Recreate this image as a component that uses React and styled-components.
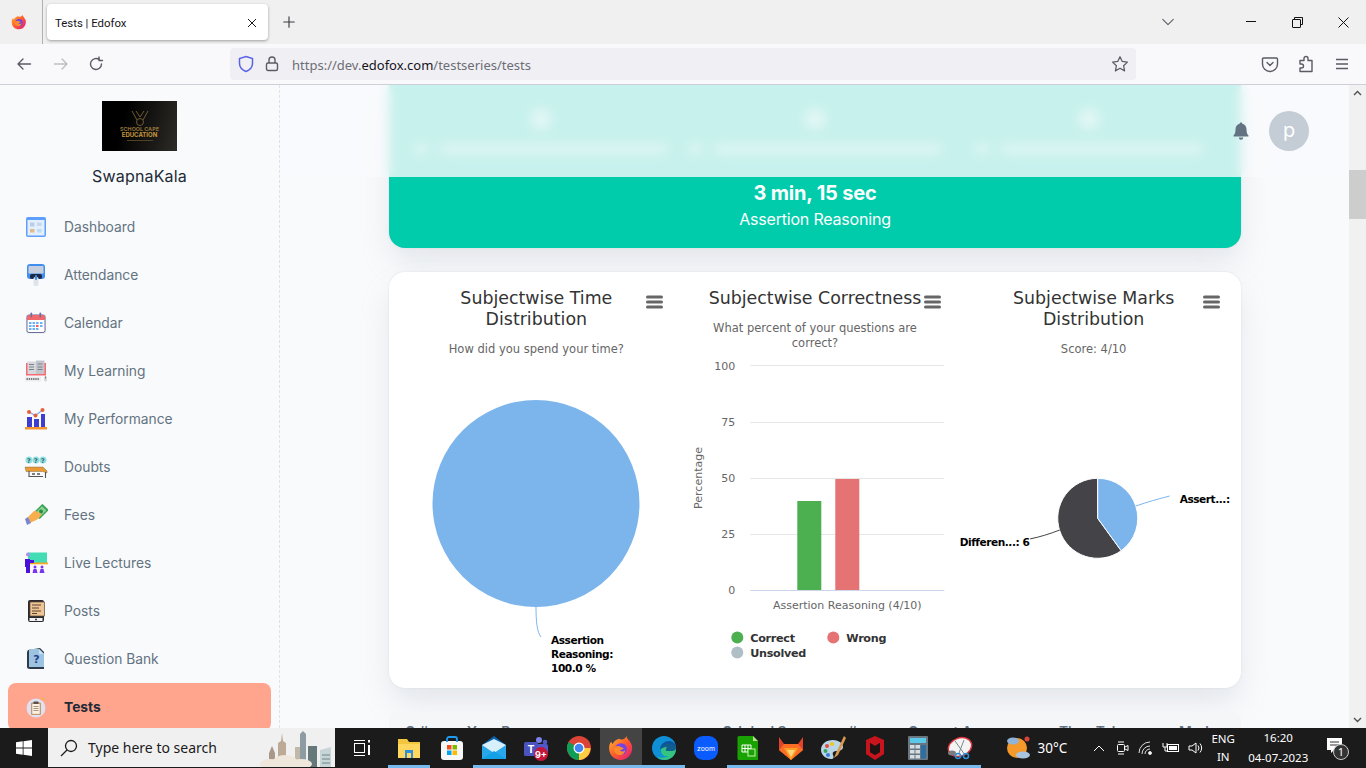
import React from "react";
import styled, { createGlobalStyle } from "styled-components";

const Global = createGlobalStyle`
  html, body { margin: 0; padding: 0; overflow: hidden; background: #fff; }
  * { box-sizing: border-box; }
  svg { display: block; flex: none; }
`;

const UI = `"Noto Sans", "Open Sans", sans-serif`;
const WEB = `Inter, "Noto Sans", sans-serif`;
const CHART = `"DejaVu Sans", sans-serif`;
const SHADOW = `0 0 2px rgba(145,158,171,.24), 0 16px 32px -4px rgba(145,158,171,.24)`;

const Page = styled.div`
  width: 1366px; height: 768px; display: flex; flex-direction: column; overflow: hidden;
`;
const TabBar = styled.div`
  height: 44px; background: #f0f0f0; display: flex; align-items: center; flex: none;
`;
const BrowserSlot = styled.div`
  width: 43px; height: 44px; display: flex; align-items: center; justify-content: center;
  border-right: 1px solid #b0b0b0; padding-right: 4px; flex: none;
`;
const Tab = styled.div`
  margin-left: 4px; width: 221px; height: 36px; background: #fff; border-radius: 4px;
  box-shadow: 0 1px 3px rgba(0,0,0,.35); display: flex; align-items: center; justify-content: space-between;
  padding: 1px 10px 0 8px; font: 11.4px Roboto, ${UI}; color: #15141a; flex: none;
`;
const NewTab = styled.div`
  margin-left: 14px; display: flex; align-items: center; flex: none;
`;
const Spacer = styled.div`flex: 1;`;
const TabList = styled.div`
  margin-right: 53px; flex: none;
`;
const WinBtn = styled.div`
  width: 46px; height: 44px; display: flex; align-items: center; justify-content: center; flex: none;
`;
const NavBar = styled.div`
  height: 41px; background: #f9f9fb; border-bottom: 1px solid #cfcfd8; display: flex; align-items: center; flex: none;
`;
const NavBtn = styled.div`
  width: ${p => p.$w}px; display: flex; justify-content: center; flex: none;
`;
const UrlBar = styled.div`
  margin-left: 112px; width: 906px; height: 32px; background: #f0f0f4; border-radius: 4px; display: flex; align-items: center;
  padding: 0 7px 0 8px; flex: none;
`;
const Shield = styled.div`margin-right: 11px; flex: none;`;
const Lock = styled.div`margin-right: 13px; flex: none;`;
const Url = styled.div`
  flex: 1; padding-top: 1px; font: 13px ${UI}; color: #6d6d75; white-space: nowrap;
  b { font-weight: 400; color: #15141a; }
`;
const ToolIcons = styled.div`
  margin-left: 125px; display: flex; gap: 18px; flex: none;
`;
const Body = styled.div`
  height: 643px; display: flex; flex: none; overflow: hidden;
`;
const Sidebar = styled.aside`
  width: 280px; flex: none; background: #f9fafc; border-right: 1px dashed #dfe3e8; padding-top: 16px;
  display: flex; flex-direction: column; overflow: hidden;
`;
const LogoBox = styled.div`
  width: 75px; height: 50px; margin: 0 0 0 102px; background: linear-gradient(105deg, #000 30%, #2e2c28);
  display: flex; flex-direction: column; align-items: center; padding-top: 9px; flex: none;
`;
const LogoLine = styled.div`
  font: 700 ${p => p.$s}px/${p => p.$s}px ${WEB}; color: ${p => p.$c}; white-space: nowrap;
`;
const LogoRule = styled.div`margin-top: 2px; width: 26px; height: 1px; background: #4e4229;`;
const OrgName = styled.div`
  margin: 15px 0 0; text-align: center; font: 400 16px/20px ${WEB}; color: #212b36; flex: none; height: 37px; letter-spacing: .01em;
`;
const Nav = styled.nav`display: flex; flex-direction: column; flex: none;`;
const NavItem = styled.div`
  height: 48px; margin: 0 8px; padding-left: 16px; display: flex; align-items: center; gap: 16px; border-radius: 8px;
  background: ${p => p.$active ? "#ffa48d" : "transparent"};
  color: ${p => p.$active ? "#212b36" : "#637381"};
  font: ${p => p.$active ? 700 : 400} 13.8px ${WEB}; flex: none;
`;
const Main = styled.main`
  flex: 1; position: relative; background: #f9fafc; overflow: hidden; padding: 0 108px 0 109px;
`;
const TopHeader = styled.header`
  position: absolute; top: 0; left: 0; right: 0; height: 92px; background: rgba(249,250,252,.8); backdrop-filter: blur(6px);
  display: flex; align-items: center; justify-content: flex-end; padding-right: 40px; gap: 18px;
`;
const Avatar = styled.div`
  width: 40px; height: 40px; border-radius: 50%; background: #c4cdd5; color: #fff; font: 20px ${WEB};
  display: flex; align-items: center; justify-content: center; padding-bottom: 2px;
`;
const TealCard = styled.section`
  height: 163px; background: #00ccab; border-radius: 0 0 16px 16px; color: #fff; text-align: center; box-shadow: ${SHADOW};
`;
const StatGrid = styled.div`
  height: 93px; padding: 24px 15px 0; display: grid; grid-template-columns: repeat(3, 1fr);
`;
const StatCol = styled.div`display: flex; flex-direction: column; align-items: center;`;
const StatBlob = styled.div`width: 20px; height: 20px; border-radius: 6px; background: rgba(255,255,255,.55);`;
const StatRow = styled.div`
  margin-top: 14px; height: 12px; width: ${p => p.$w}px; display: flex; gap: 12px;
`;
const StatMark = styled.div`width: 14px; background: rgba(255,255,255,.45); border-radius: 2px; flex: none;`;
const StatBar = styled.div`flex: 1; background: rgba(255,255,255,.42); border-radius: 2px;`;
const StatTime = styled.div`font: 700 20px/30px ${WEB}; letter-spacing: -.01em;`;
const StatName = styled.div`font: 400 16px/24px ${WEB}; margin-top: -1px; letter-spacing: -.012em;`;
const ChartCard = styled.section`
  margin-top: 24px; height: 416px; padding: 8px; background: #fff; border-radius: 16px;
  box-shadow: ${SHADOW};
  display: grid; grid-template-columns: repeat(3, 1fr);
`;
const ChartBox = styled.div`position: relative; height: 400px; display: flex; flex-direction: column;`;
const ChartHead = styled.div`height: 84px; padding: 8px 24px 0; text-align: center; flex: none;`;
const ChartTitle = styled.div`font: 400 17.4px/21px ${CHART}; color: #333;`;
const ChartSub = styled.div`margin: 12px -8px 0; font: 400 11.5px/15px ${CHART}; color: #666;`;
const MenuBtn = styled.div`position: absolute; top: 15px; right: 12px;`;
const PlotSvg = styled.svg`width: 100%; height: 316px; overflow: visible;`;
const Tick = styled.text`font: 11px ${CHART}; fill: #666;`;
const DataLabel = styled.text`
  font: 700 10.6px ${CHART}; letter-spacing: -.45px; fill: #000; stroke: #fff; stroke-width: 2px; paint-order: stroke; stroke-linejoin: round;
`;
const LegendText = styled.text`font: 700 11.2px ${CHART}; letter-spacing: -.3px; fill: #333;`;
const TableHead = styled.div`
  margin-top: 24px; height: 40px; background: #f4f6f8; border-radius: 8px; display: grid; padding-left: 16px;
  grid-template-columns: 62px 255px 186px 151px 120px 1fr; align-items: center;
  font: 600 13.8px ${WEB}; color: #637381;
`;
const Scrollbar = styled.div`
  width: 17px; flex: none; background: #f1f1f1; display: flex; flex-direction: column; align-items: center; justify-content: space-between;
  padding: 5px 0; position: relative;
`;
const Thumb = styled.div`
  position: absolute; top: 85px; left: 0; right: 0; height: 49px; background: #cdcdcd;
`;
const Taskbar = styled.footer`
  height: 40px; background: #1b1b1b; display: flex; align-items: stretch; flex: none;
`;
const Start = styled.div`width: 48px; display: flex; align-items: center; justify-content: center; flex: none;`;
const Search = styled.div`
  width: 287px; height: 39px; background: #f0f0f0; display: flex; align-items: center; padding-left: 12px; gap: 10px;
  font: 14px ${UI}; color: #1b1b1b; flex: none; position: relative; overflow: hidden;
`;
const City = styled.div`position: absolute; right: 0; bottom: 0;`;
const TaskView = styled.div`width: 53px; display: flex; align-items: center; justify-content: center; flex: none;`;
const AppSlot = styled.div`
  width: 42.4px; display: flex; align-items: center; justify-content: center; flex: none; position: relative;
  background: ${p => p.$active ? "#444" : "transparent"};
  border-bottom: 3px solid ${p => p.$run ? "#76b9ed" : "transparent"};
  padding-top: 3px;
`;
const Tray = styled.div`
  flex: 1; display: flex; align-items: center; position: relative; color: #fff; font: 13px ${UI};
`;
const Weather = styled.div`margin-left: 23px; display: flex; align-items: center; gap: 5px; flex: none; font-size: 13.5px;`;
const TrayIcons = styled.div`margin-left: 24px; display: flex; align-items: center; gap: 7px; flex: none;`;
const Lang = styled.div`margin-left: 5px; width: 26px; text-align: center; font: 11.5px/18px ${UI}; flex: none;`;
const Clock = styled.div`margin-left: 7px; width: 70px; text-align: center; font: 11.5px/20px ${UI}; flex: none;`;
const Notify = styled.div`margin-left: 12px; position: relative; flex: none;`;

/* ---------- browser glyphs ---------- */
const Stroke = ({ s = 16, c = "#5b5b66", w = 1.4, d, fill = "none" }) => (
  <svg width={s} height={s} viewBox="0 0 16 16" fill={fill} stroke={c} strokeWidth={w} strokeLinecap="round" strokeLinejoin="round"><path d={d} /></svg>
);
const Firefox = ({ s = 16 }) => (
  <svg width={s} height={s} viewBox="0 0 24 24">
    <defs>
      <linearGradient id="ffa" x1="0" y1="0" x2="1" y2="1"><stop offset="0" stopColor="#ffbd2e" /><stop offset=".5" stopColor="#ff5a2c" /><stop offset="1" stopColor="#e31587" /></linearGradient>
    </defs>
    <path d="M17 1c.6 3 3.800 4.500 5 8.500 1.500 6-2.500 13.500-10 13.500C5.500 23 1 18.500 1 12c0-2.500.8-4.500 2-6 .2 1 .6 1.800 1.300 2.300C5.500 5.500 8 4.500 10 3.500 13 5 16 4 17 1z" fill="url(#ffa)" />
    <circle cx="12" cy="13" r="5.500" fill="#7542e5" />
    <path d="M6.500 11c2-1.500 4-1 5.500 0 1 .7 2 .3 2.500 1.500-1 1-2.500 1-3.500 2 2 1.200 4 .7 5-1-.2 2.800-2.500 5-5 5-3 0-5.500-2.500-5.500-5 0-1 .2-1.800 1-2.500z" fill="#ff8a2b" />
  </svg>
);

/* ---------- sidebar icons ---------- */
const Ic = ({ children }) => <svg width="24" height="24" viewBox="0 0 24 24">{children}</svg>;
const icons = {
  dashboard: (
    <Ic>
      <rect x="2" y="2" width="20" height="20" rx="2" fill="#5e9eff" />
      <rect x="3.500" y="5" width="17" height="15.500" fill="#e4effd" />
      <rect x="6" y="7.500" width="4.500" height="4" fill="#b9cde6" /><rect x="13" y="7.500" width="4.500" height="3.500" fill="#c5d7ee" />
      <rect x="6" y="14" width="4.500" height="3.500" fill="#e3b98f" /><rect x="13" y="14" width="4.500" height="3.500" fill="#bcdcf5" />
    </Ic>
  ),
  attendance: (
    <Ic>
      <rect x="3" y="1" width="18" height="15" rx="3" fill="#3f8ef0" />
      <rect x="4.500" y="3" width="15" height="7.500" fill="#c5cfdd" />
      <rect x="6" y="11" width="12" height="5" rx="2" fill="#1d2a44" />
      <rect x="9.500" y="14" width="5" height="9" rx="1.500" fill="#dfe3ea" />
      <rect x="11" y="12" width="2" height="5" rx="1" fill="#3f8ef0" />
    </Ic>
  ),
  calendar: (
    <Ic>
      <rect x="2" y="3.500" width="20" height="19" rx="2" fill="#dfe3ef" />
      <rect x="3" y="4" width="18" height="17.500" rx="2" fill="#fff" stroke="#6b6f9c" />
      <path d="M3 6a2 2 0 0 1 2-2h14a2 2 0 0 1 2 2v3H3z" fill="#f2676c" />
      <rect x="6.500" y="1.500" width="1.600" height="5" rx=".8" fill="#6b6f9c" /><rect x="15.500" y="1.500" width="1.600" height="5" rx=".8" fill="#6b6f9c" />
      <g fill="#6cb1f5">
        <rect x="5" y="11" width="2.500" height="2" /><rect x="8.500" y="11" width="2.500" height="2" /><rect x="12" y="11" width="2.500" height="2" /><rect x="16" y="11" width="2.500" height="2" />
        <rect x="5" y="14" width="2.500" height="2" /><rect x="8.500" y="14" width="2.500" height="2" /><rect x="16" y="14" width="2.500" height="2" />
        <rect x="5" y="17" width="2.500" height="2" /><rect x="8.500" y="17" width="2.500" height="2" /><rect x="12" y="17" width="2.500" height="2" />
      </g>
      <rect x="12" y="14" width="2.500" height="2" fill="#ee5a5f" />
    </Ic>
  ),
  learning: (
    <Ic>
      <rect x="2" y="4" width="20" height="12.500" fill="#f66b72" />
      <rect x="3.500" y="2.500" width="8.500" height="12.500" fill="#d6d8dd" /><rect x="12" y="1.500" width="8.500" height="13.500" fill="#c3c5cc" />
      <g stroke="#7c8088" strokeWidth="1"><path d="M5 5.500h5M5 8h5M5 10.500h5M13.500 5h5M13.500 8h5M13.500 10.500h5" /></g>
      <rect x="1" y="17.500" width="16" height="5" rx="1" fill="#eceef1" />
      <path d="M2.500 20h13" stroke="#555" strokeWidth="1.400" strokeDasharray="1.400 .8" />
      <rect x="20" y="17" width="3" height="5.500" rx="1.500" fill="#d5d7db" /><path d="M21.500 17.500v2" stroke="#666" strokeWidth=".8" />
    </Ic>
  ),
  performance: (
    <Ic>
      <rect x="3" y="10" width="5" height="10" fill="#3d3ed1" /><rect x="10" y="12" width="5" height="8" fill="#3d3ed1" /><rect x="17" y="7" width="4" height="13" fill="#3d3ed1" />
      <rect x="1" y="20" width="22" height="2.500" fill="#f59331" />
      <path d="M5 5l6.500 3.500L18.500 3" stroke="#7fa8f5" strokeWidth="1.200" fill="none" />
      <circle cx="5" cy="5" r="2" fill="#e85f3c" /><circle cx="11.500" cy="8.500" r="2" fill="#e85f3c" /><circle cx="18.500" cy="3" r="2" fill="#e85f3c" />
    </Ic>
  ),
  doubts: (
    <Ic>
      <g fill="#8fe0e0"><circle cx="5" cy="5" r="3.500" /><circle cx="12" cy="5" r="3.500" /><circle cx="19" cy="5" r="3.500" /></g>
      <g fontFamily="DejaVu Sans, sans-serif" fontSize="6.500" fontWeight="700" fill="#44656d" textAnchor="middle"><text x="5" y="7.500">?</text><text x="12" y="7.500">?</text><text x="19" y="7.500">?</text></g>
      <path d="M1 12h18l4 4v2l-4-1.500H2z" fill="#e79a35" stroke="#7a5d2b" strokeWidth=".4" />
      <path d="M5 16v6M5 21.500h14M21.500 17v6" stroke="#555" strokeWidth="1.100" fill="none" />
      <path d="M8 19h3M13 19h3" stroke="#555" strokeWidth="1.300" />
    </Ic>
  ),
  fees: (
    <Ic>
      <rect x="10.500" y="4" width="13" height="9" rx="1" transform="rotate(-45 17 8.500)" fill="#3fa45a" />
      <rect x="12.500" y="5.500" width="9" height="6" transform="rotate(-45 17 8.500)" fill="#8cd28f" />
      <circle cx="17" cy="8.500" r="2" fill="#2e8a47" />
      <path d="M4 14l6-6c2-1 3 2 5 1.500l2 1c0 3-3 6.500-7 7.500l-4 2z" fill="#f8ae4c" />
      <path d="M1 16l3-2 3 6-4 2z" fill="#7c85cf" />
    </Ic>
  ),
  live: (
    <Ic>
      <rect x="4" y="1.500" width="19" height="10.500" fill="#42dcb5" />
      <rect x="1" y="11.500" width="23" height="1.800" fill="#f5a623" />
      <circle cx="4" cy="3.500" r="2" fill="#a98ff0" />
      <path d="M1 8h5v1h4v3H6v10H2v-6H1z" fill="#4a12d8" />
      <g fill="#7b33f2"><circle cx="11" cy="16" r="1.500" /><path d="M8.500 22l1-4h3l1 4z" /><circle cx="18" cy="16" r="1.500" /><path d="M15.500 22l1-4h3l1 4z" /></g>
    </Ic>
  ),
  posts: (
    <Ic>
      <rect x="4" y="1" width="16" height="22" rx="2" fill="#2b2b2f" />
      <rect x="5.500" y="19" width="13" height="3" fill="#f3f3f3" />
      <circle cx="12" cy="20.500" r=".9" fill="#2b2b2f" />
      <rect x="6" y="3" width="14.500" height="14" fill="#efc596" stroke="#5e4a35" strokeWidth=".7" />
      <path d="M8 6h9M8 9h7M8 12h9M8 14.500h5" stroke="#594430" strokeWidth="1" />
    </Ic>
  ),
  bank: (
    <Ic>
      <path d="M4 3l12-2 4 4v17H6c-2 0-3-1-3-2V5z" fill="#2f3a4c" />
      <path d="M5 2h10l5 5v13H5z" fill="#9cc3e0" />
      <path d="M15 2l5 5h-5z" fill="#c9e1f1" />
      <text x="12.500" y="16" textAnchor="middle" fontFamily="DejaVu Sans, sans-serif" fontSize="11" fontWeight="700" fill="#24408e">?</text>
    </Ic>
  ),
  tests: (
    <Ic>
      <circle cx="12" cy="13" r="9.500" fill="#dfe0f3" />
      <rect x="7" y="7.500" width="10" height="12.500" rx="1" fill="#c59b6b" />
      <rect x="8.300" y="9" width="7.400" height="9.800" fill="#fdf3e4" />
      <rect x="9.500" y="6.500" width="5" height="2.500" rx=".7" fill="#55514f" />
      <path d="M9.500 11.500h5M9.500 13.500h5M9.500 15.500h5" stroke="#9b8874" strokeWidth=".9" />
      <path d="M19 2l.7 1.500 1.500.5-1.500.7L19 6l-.7-1.300-1.500-.7 1.500-.5z" fill="#f6b73c" />
    </Ic>
  ),
};

const navItems = [
  ["Dashboard", "dashboard"], ["Attendance", "attendance"], ["Calendar", "calendar"], ["My Learning", "learning"],
  ["My Performance", "performance"], ["Doubts", "doubts"], ["Fees", "fees"], ["Live Lectures", "live"],
  ["Posts", "posts"], ["Question Bank", "bank"], ["Tests", "tests", true],
];

const BurgerIcon = () => (
  <svg width="18" height="14" viewBox="0 0 18 14"><g fill="#666"><rect x="0" y="0.500" width="17" height="3" rx="1.500" /><rect x="0" y="5.500" width="17" height="3" rx="1.500" /><rect x="0" y="10.500" width="17" height="3" rx="1.500" /></g></svg>
);

const Chart = ({ title, sub, children }) => (
  <ChartBox>
    <ChartHead>
      <ChartTitle>{title}</ChartTitle>
      <ChartSub>{sub}</ChartSub>
    </ChartHead>
    <MenuBtn><BurgerIcon /></MenuBtn>
    <PlotSvg viewBox="0 0 278.67 316">{children}</PlotSvg>
  </ChartBox>
);

/* plot coordinates: page x − column left, page y − 364 */
const TimePlot = () => (
  <>
    <circle cx="139" cy="139.500" r="103.500" fill="#7cb5ec" />
    <path d="M139 243c0 14 1 25 5 30" fill="none" stroke="#7cb5ec" />
    <DataLabel x="154" y="280">Assertion</DataLabel>
    <DataLabel x="154" y="294">Reasoning:</DataLabel>
    <DataLabel x="154" y="308">100.0 %</DataLabel>
  </>
);

const BarPlot = () => (
  <>
    {[["100", 2, 1.5], ["75", 58, 58.5], ["50", 114, 114.5], ["25", 170, 170.5]].map(([t, y, line]) => (
      <g key={t}>
        <path d={`M74.300 ${line}H268.300`} stroke="#e6e6e6" />
        <Tick x="59.300" y={y + 4} textAnchor="end">{t}</Tick>
      </g>
    ))}
    <Tick x="59.300" y="230" textAnchor="end">0</Tick>
    <rect x="121.300" y="137" width="24" height="89" fill="#4caf50" />
    <rect x="159.300" y="115" width="24" height="111" fill="#e57373" />
    <path d="M74.300 226.500H268.300" stroke="#ccd6eb" />
    <Tick transform="translate(26 114) rotate(-90)" textAnchor="middle">Percentage</Tick>
    <Tick x="171.300" y="245" textAnchor="middle">Assertion Reasoning (4/10)</Tick>
    <circle cx="61.300" cy="273.500" r="6" fill="#4caf50" />
    <LegendText x="74.300" y="277.500">Correct</LegendText>
    <circle cx="157.300" cy="273.500" r="6" fill="#e57373" />
    <LegendText x="170.300" y="277.500">Wrong</LegendText>
    <circle cx="61.300" cy="288.500" r="6" fill="#b0bec5" />
    <LegendText x="74.300" y="292.500">Unsolved</LegendText>
  </>
);

const MarksPlot = () => (
  <>
    <path d="M143.700 154.300L167.200 186.700A40 40 0 1 1 143.700 114.300Z" fill="#434348" stroke="#fff" />
    <path d="M143.700 154.300V114.300A40 40 0 0 1 167.200 186.700Z" fill="#7cb5ec" stroke="#fff" />
    <path d="M181.700 142c12-4 22-7 34-10" fill="none" stroke="#7cb5ec" />
    <path d="M105.700 166c-10 4-20 7-30 9" fill="none" stroke="#434348" />
    <DataLabel x="225.700" y="139">Assert...:</DataLabel>
    <DataLabel x="5.700" y="182">Differen...: 6</DataLabel>
  </>
);

/* ---------- taskbar icons ---------- */
const AppIc = ({ children }) => <svg width="26" height="26" viewBox="0 0 26 26">{children}</svg>;
const apps = [
  { k: "explorer", run: true, el: (
    <AppIc>
      <path d="M2 4h9l2 3h11v16H2z" fill="#f3c63f" /><rect x="2" y="9" width="22" height="14" fill="#ffd75e" />
      <rect x="9" y="15" width="8" height="8" fill="#2f8fd8" /><rect x="11" y="18" width="4" height="5" fill="#ffd75e" />
    </AppIc>) },
  { k: "store", el: (
    <AppIc>
      <rect x="2" y="6" width="22" height="19" rx="3" fill="#f7f7f7" />
      <path d="M8 7V4a2 2 0 0 1 2-2h6a2 2 0 0 1 2 2v3" fill="none" stroke="#1d9bf0" strokeWidth="1.800" />
      <rect x="8" y="10" width="4.500" height="4.500" fill="#f25022" /><rect x="13.500" y="10" width="4.500" height="4.500" fill="#7fba00" />
      <rect x="8" y="15.500" width="4.500" height="4.500" fill="#00a4ef" /><rect x="13.500" y="15.500" width="4.500" height="4.500" fill="#ffb900" />
    </AppIc>) },
  { k: "mail", run: true, el: (
    <AppIc>
      <path d="M1 10L13 1l12 9v14H1z" fill="#0a64ad" /><rect x="1" y="10" width="24" height="14" fill="#28a8ea" />
      <path d="M1 10l12 8 12-8-12-6z" fill="#d8f0fc" />
      <path d="M1 24l12-8 12 8z" fill="#14a0e6" />
    </AppIc>) },
  { k: "teams", run: true, el: (
    <AppIc>
      <circle cx="16" cy="5" r="3" fill="#7b83eb" /><circle cx="22" cy="7" r="2.300" fill="#5059c9" />
      <rect x="13" y="9" width="12" height="10" rx="2" fill="#5059c9" /><rect x="1" y="7" width="14" height="14" rx="1.500" fill="#4b53bc" />
      <text x="8" y="18" textAnchor="middle" fontFamily="Inter, sans-serif" fontWeight="700" fontSize="10.500" fill="#fff">T</text>
      <circle cx="18" cy="19" r="7" fill="#c4163a" />
      <text x="18" y="22.500" textAnchor="middle" fontFamily="Inter, sans-serif" fontWeight="700" fontSize="9" fill="#fff">9+</text>
    </AppIc>) },
  { k: "chrome", run: true, el: (
    <AppIc>
      <circle cx="13" cy="13" r="12" fill="#db4437" />
      <path d="M13 13L2.600 7A12 12 0 0 0 13 25l5-9z" fill="#0f9d58" />
      <path d="M13 13h11.500A12 12 0 0 1 13 25z" fill="#ffcd40" />
      <circle cx="13" cy="13" r="5.500" fill="#fff" /><circle cx="13" cy="13" r="4.300" fill="#4285f4" />
    </AppIc>) },
  { k: "firefox", run: true, active: true, el: <Firefox s={26} /> },
  { k: "edge", run: true, el: (
    <AppIc>
      <circle cx="13" cy="13" r="12" fill="#0f8fd6" />
      <path d="M25 14c0 7-6 11-11 11-3 0-6-1-8-3 3 1 9 1 12-1-4 1-8-1-8-5 0-6 5-8 9-7 3 .6 6 2.500 6 5z" fill="#33c481" />
      <path d="M9 15c0-6 5-9 9-9s7 3 7 7c0 2-2 3-4 3h-5c-2 0-1-3 0-4-3 0-7 2-7 3z" fill="#0c4b8f" opacity=".85" />
    </AppIc>) },
  { k: "zoom", el: (
    <AppIc>
      <rect x="1" y="1" width="24" height="24" rx="9" fill="#0b5cff" />
      <text x="13" y="15.500" textAnchor="middle" fontFamily="Inter, sans-serif" fontSize="6.800" fill="#fff">zoom</text>
    </AppIc>) },
  { k: "sheets", run: true, el: (
    <AppIc>
      <path d="M4 1h14l5 5v19H4a1.500 1.500 0 0 1-1.500-1.500v-21A1.500 1.500 0 0 1 4 1z" fill="#18a303" /><path d="M18 1l5 5h-5z" fill="#b4e08c" />
      <g fill="none" stroke="#fff" strokeWidth="1"><path d="M7 10h9v7H7zM10 10v7M13 10v7M7 13.500h9" /></g>
      <rect x="13" y="14" width="7" height="7" fill="#18a303" stroke="#c9efb1" />
    </AppIc>) },
  { k: "gitlab", run: true, el: (
    <AppIc>
      <path d="M1 2l5 7h14l5-7v13L13 25 1 15z" fill="#e24329" />
      <path d="M6 9h14l5 6-12 10L1 15z" fill="#fc6d26" />
      <path d="M6 13h14l-7 12z" fill="#fca326" />
      <path d="M9 15h8l-4 7z" fill="#fdd47c" />
    </AppIc>) },
  { k: "paint", run: true, el: (
    <AppIc>
      <path d="M13 5C6 5 1 9 1 15c0 5 5 9 10 9 3 0 3-2 2-4-1-3 1-4 4-4 4 0 6-2 6-4 0-4-5-7-10-7z" fill="#b9d5e8" />
      <circle cx="7" cy="11" r="2" fill="#e74c3c" /><circle cx="12" cy="9" r="2" fill="#f5c518" /><circle cx="5.500" cy="16" r="2" fill="#3ba55d" /><circle cx="8" cy="20" r="2" fill="#3c78d8" />
      <path d="M24 1l-8 17-2 5 4-3 8-17z" fill="#d99a4e" />
    </AppIc>) },
  { k: "mcafee", run: true, el: (
    <AppIc>
      <path d="M13 1l9 4v14l-9 6V20l5-3V8l-5 3-5-3v9l5 3v5l-9-6V5z" fill="#c8141c" />
      <path d="M8 8l5 3 5-3v9l-5 3-5-3z" fill="#1f1414" />
    </AppIc>) },
  { k: "calc", run: true, el: (
    <AppIc>
      <rect x="3" y="1" width="20" height="24" rx="1" fill="#6a7680" />
      <rect x="5" y="3" width="16" height="5" fill="#5bc8e8" />
      <g fill="#d5dde3"><rect x="5" y="10" width="4.500" height="3.500" /><rect x="10.500" y="10" width="4.500" height="3.500" /><rect x="5" y="15" width="4.500" height="3.500" /><rect x="10.500" y="15" width="4.500" height="3.500" /><rect x="5" y="20" width="4.500" height="3.500" /><rect x="10.500" y="20" width="4.500" height="3.500" /></g>
      <rect x="16" y="10" width="5" height="13.500" fill="#2d6fa3" />
    </AppIc>) },
  { k: "snip", run: true, el: (
    <AppIc>
      <ellipse cx="13" cy="12" rx="12" ry="9" transform="rotate(-20 13 12)" fill="#f4f4f4" stroke="#d8333b" strokeWidth="1.400" />
      <path d="M8 6l10 14M17 5L12 18" stroke="#7c8790" strokeWidth="1" />
      <circle cx="19" cy="21" r="2.500" fill="none" stroke="#2b8fd8" strokeWidth="1.500" /><circle cx="11" cy="21" r="2.500" fill="none" stroke="#2b8fd8" strokeWidth="1.500" />
      <ellipse cx="5" cy="18" rx="4" ry="2.500" fill="#7c7c80" />
    </AppIc>) },
];

export default function App() {
  return (
    <Page>
      <Global />
      <TabBar>
        <BrowserSlot><Firefox /></BrowserSlot>
        <Tab>
          <span>Tests | Edofox</span>
          <Stroke s={12} c="#15141a" w={1.3} d="M3 3l10 10M13 3L3 13" />
        </Tab>
        <NewTab><Stroke s={14} c="#3a3a42" w={1.3} d="M8 2v12M2 8h12" /></NewTab>
        <Spacer />
        <TabList><Stroke s={14} c="#5b5b66" w={1.2} d="M2 5l6 6 6-6" /></TabList>
        <WinBtn><svg width="10" height="2"><rect width="10" height="1" fill="#111" /></svg></WinBtn>
        <WinBtn><svg width="11" height="11" viewBox="0 0 11 11" fill="none" stroke="#111"><path d="M2.500 2.500V.5h8v7h-2" /><rect x=".5" y="2.500" width="8" height="8" rx=".5" /></svg></WinBtn>
        <WinBtn><svg width="11" height="11" viewBox="0 0 11 11" stroke="#111"><path d="M.5.5l10 10M10.500.5l-10 10" /></svg></WinBtn>
      </TabBar>
      <NavBar>
        <NavBtn $w={47}><Stroke d="M14.500 8H2M7 3L2 8l5 5" /></NavBtn>
        <NavBtn $w={27}><Stroke c="#bdbdc4" d="M1.500 8H14M9 3l5 5-5 5" /></NavBtn>
        <NavBtn $w={44}><Stroke d="M13.500 8a5.500 5.500 0 1 1-2-4.300M11 1v3.500h3.500" /></NavBtn>
        <UrlBar>
          <Shield><svg width="16" height="18" viewBox="0 0 16 18" fill="none" stroke="#5a62e8" strokeWidth="1.500"><path d="M8 1.500l6.500 2v5c0 4-3 6.500-6.500 8-3.500-1.500-6.500-4-6.500-8v-5z" /></svg></Shield>
          <Lock><svg width="14" height="16" viewBox="0 0 14 16" fill="none" stroke="#5b5b66" strokeWidth="1.400"><rect x="1.500" y="7" width="11" height="7.500" rx="1.500" /><path d="M4 7V4a3 3 0 0 1 6 0v3" /></svg></Lock>
          <Url>https://dev.<b>edofox.com</b>/testseries/tests</Url>
          <Stroke s={18} c="#5b5b66" w={1.1} d="M8 1.500l2 4.200 4.600.6-3.400 3.200.9 4.600L8 11.800l-4.100 2.300.9-4.600L1.400 6.300 6 5.700z" />
        </UrlBar>
        <ToolIcons>
          <svg width="18" height="18" viewBox="0 0 18 18" fill="none" stroke="#5b5b66" strokeWidth="1.400" strokeLinejoin="round"><path d="M2.500 3h13a1 1 0 0 1 1 1v5a7.500 7.500 0 0 1-15 0V4a1 1 0 0 1 1-1z" /><path d="M6 7.500l3 3 3-3" strokeLinecap="round" /></svg>
          <svg width="18" height="18" viewBox="0 0 18 18" fill="none" stroke="#5b5b66" strokeWidth="1.400" strokeLinejoin="round"><path d="M3 5.500h4V3.500a2 2 0 0 1 4 0v2h4v11H3v-3.500h1.500a2 2 0 0 0 0-4H3z" /></svg>
          <svg width="18" height="18" viewBox="0 0 18 18" stroke="#5b5b66" strokeWidth="1.400"><path d="M3 4.500h12M3 9h12M3 13.500h12" /></svg>
        </ToolIcons>
      </NavBar>

      <Body>
        <Sidebar>
          <LogoBox>
            <svg width="18" height="17" viewBox="0 0 18 17" fill="none" stroke="#6d5a34" strokeWidth="1"><path d="M1 1l5 9M17 1l-5 9M5 1l4 6 4-6" /><circle cx="9" cy="12" r="3.500" /></svg>
            <LogoLine $s={5.4} $c="#8f7238">SCHOOL CAPE</LogoLine>
            <LogoLine $s={6} $c="#c9983f">EDUCATION</LogoLine>
            <LogoRule />
          </LogoBox>
          <OrgName>SwapnaKala</OrgName>
          <Nav>
            {navItems.map(([label, ic, active]) => (
              <NavItem key={label} $active={active}>{icons[ic]}{label}</NavItem>
            ))}
          </Nav>
        </Sidebar>
        <Main>
          <TealCard>
            <StatGrid>
              {[254, 254, 228].map((w, i) => (
                <StatCol key={i}><StatBlob /><StatRow $w={w}><StatMark /><StatBar /></StatRow></StatCol>
              ))}
            </StatGrid>
            <StatTime>3 min, 15 sec</StatTime>
            <StatName>Assertion Reasoning</StatName>
          </TealCard>
          <ChartCard>
            <Chart title="Subjectwise Time Distribution" sub="How did you spend your time?"><TimePlot /></Chart>
            <Chart title="Subjectwise Correctness" sub="What percent of your questions are correct?"><BarPlot /></Chart>
            <Chart title="Subjectwise Marks Distribution" sub="Score: 4/10"><MarksPlot /></Chart>
          </ChartCard>
          <TableHead>
            <span>Q #</span><span>Your Response</span><span>Original Sequence #</span><span>Correct Answer</span><span>Time Taken</span><span>Marks</span>
          </TableHead>
          <TopHeader>
            <svg width="20" height="20" viewBox="0 0 20 20" fill="#637381"><path d="M10 1.500c.8 0 1.300.5 1.400 1.200C14 3.300 15.500 5.500 15.500 8.500c0 3 .6 4.600 2 6V15.500h-15v-1c1.400-1.400 2-3 2-6 0-3 1.500-5.200 4.100-5.800.1-.7.6-1.200 1.400-1.200z" /><path d="M7.800 16.500h4.400a2.200 2.200 0 0 1-4.400 0z" /></svg>
            <Avatar>p</Avatar>
          </TopHeader>
        </Main>
        <Scrollbar>
          <svg width="9" height="6" viewBox="0 0 9 6" fill="none" stroke="#505050" strokeWidth="1.400"><path d="M1 5l3.500-3.500L8 5" /></svg>
          <Thumb />
          <svg width="9" height="6" viewBox="0 0 9 6" fill="none" stroke="#505050" strokeWidth="1.400"><path d="M1 1l3.500 3.500L8 1" /></svg>
        </Scrollbar>
      </Body>

      <Taskbar>
        <Start>
          <svg width="16" height="16" viewBox="0 0 16 16" fill="#fff"><path d="M0 2.300l6.700-1v6.300H0zM7.500 1.200L16 0v7.600H7.500zM0 8.400h6.700v6.300l-6.700-1zM7.500 8.400H16V16l-8.500-1.200z" /></svg>
        </Start>
        <Search>
          <svg width="18" height="18" viewBox="0 0 18 18" fill="none" stroke="#1b1b1b" strokeWidth="1.300"><circle cx="11" cy="7" r="5.500" /><path d="M7 11l-6 6" /></svg>
          Type here to search
          <City>
            <svg width="78" height="38" viewBox="0 0 78 38">
              <path d="M12 38V24l3-7 3 7v14z" fill="#a9988a" />
              <path d="M21 38V14l3-2 1-8 1 8 3 2v24z" fill="#bca996" />
              <path d="M43 38V5l3-3 3 3v33z" fill="#8f9ba3" />
              <path d="M38 38V18h5v20z" fill="#c2b8a8" />
              <path d="M51 38V17h9v21z" fill="#66797a" />
              <path d="M63 38V21l11-3v20z" fill="#c7d5d7" />
              <path d="M65 26h8M65 30h8M65 34h8" stroke="#6f8586" />
              <g fill="#efe6dc"><ellipse cx="13" cy="35" rx="10" ry="5" /><ellipse cx="28" cy="33" rx="12" ry="7" /><ellipse cx="44" cy="35" rx="11" ry="5" /></g>
            </svg>
          </City>
        </Search>
        <TaskView>
          <svg width="18" height="18" viewBox="0 0 18 18" fill="none" stroke="#fff"><path d="M1 1.500h11M1 16.500h11" /><rect x="1.500" y="4.500" width="10" height="9" /><rect x="15" y="1" width="2" height="2.500" fill="#fff" stroke="none" /><rect x="15" y="6" width="2" height="10" fill="#fff" stroke="none" /></svg>
        </TaskView>
        {apps.map(a => <AppSlot key={a.k} $run={a.run} $active={a.active}>{a.el}</AppSlot>)}
        <Tray>
          <Weather>
            <svg width="28" height="28" viewBox="0 0 28 28"><circle cx="13" cy="14" r="10" fill="#f59a2a" /><circle cx="23" cy="5" r="2.500" fill="#d8443c" /><ellipse cx="9" cy="7" rx="6" ry="3.500" fill="#8eb4d9" /><ellipse cx="19" cy="21" rx="7" ry="3.500" fill="#a9c4df" /></svg>
            30°C
          </Weather>
          <TrayIcons>
            <svg width="16" height="16" viewBox="0 0 16 16" fill="none" stroke="#fff"><path d="M3 11l5-5 5 5" /></svg>
            <svg width="16" height="18" viewBox="0 0 16 18" fill="none" stroke="#fff"><path d="M4 3h6M4 15h6" /><rect x="3.500" y="5.500" width="7" height="7" rx="1" /><path d="M11 8l3-1.500v5L11 10" /></svg>
            <svg width="18" height="16" viewBox="0 0 18 16" fill="none" stroke="#ddd"><path d="M2 13a11 11 0 0 1 11-11M5 14a8 8 0 0 1 8-8M8 14a5 5 0 0 1 5-5" /><circle cx="13" cy="13" r="1.500" fill="#fff" /></svg>
            <svg width="18" height="16" viewBox="0 0 18 16" fill="none" stroke="#fff"><rect x="5.500" y="4.500" width="11" height="7" /><rect x="7" y="6" width="8" height="4" fill="#fff" stroke="none" /><path d="M1 3v4h4V3M3 7v4h2" /></svg>
            <svg width="18" height="16" viewBox="0 0 18 16" fill="none" stroke="#fff"><path d="M2 6v4h3l4 3V3L5 6zM11 5.500a4 4 0 0 1 0 5M13 3.500a7 7 0 0 1 0 9" /></svg>
          </TrayIcons>
          <Lang>ENG<br />IN</Lang>
          <Clock>16:20<br />04-07-2023</Clock>
          <Notify>
            <svg width="26" height="28" viewBox="0 0 26 28"><path d="M2 4h15v12H9l-3 3v-3H2z" fill="#fff" /><path d="M5 8h9M5 11h9" stroke="#333" /><circle cx="16" cy="18" r="7.500" fill="#333" stroke="#ccc" /><text x="16" y="22" textAnchor="middle" fontFamily="Noto Sans, sans-serif" fontSize="11" fill="#fff">1</text></svg>
          </Notify>
        </Tray>
      </Taskbar>
    </Page>
  );
}
